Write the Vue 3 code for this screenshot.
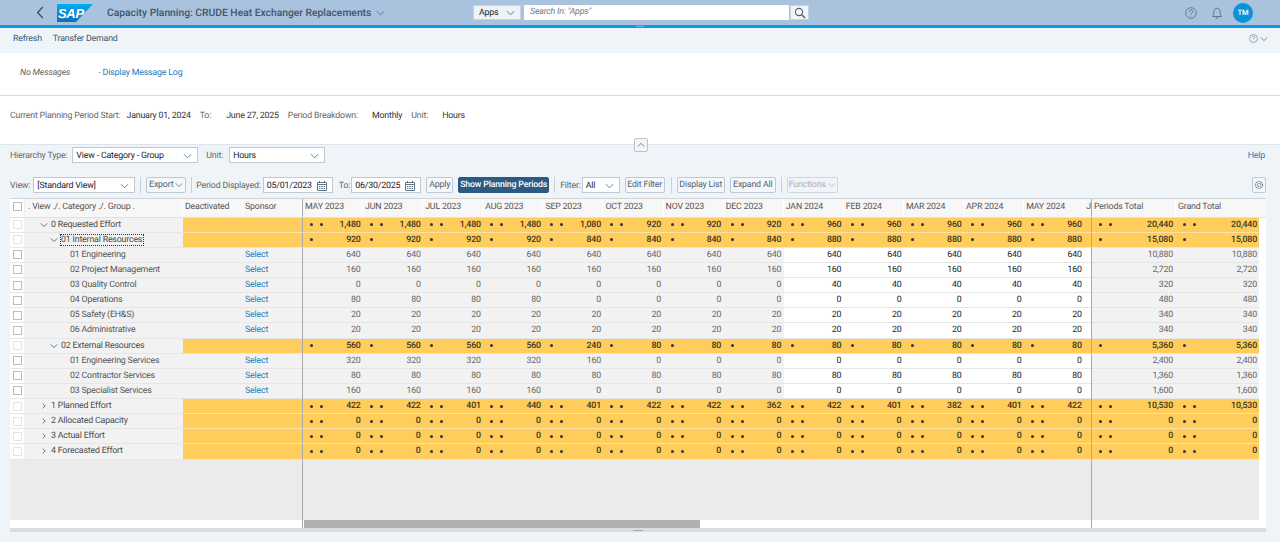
<script setup>
const months = ['MAY 2023','JUN 2023','JUL 2023','AUG 2023','SEP 2023','OCT 2023','NOV 2023','DEC 2023','JAN 2024','FEB 2024','MAR 2024','APR 2024','MAY 2024','JUN 2024']
const rep = (v, n) => Array(n).fill(v)
const rows = [
  { label: '0 Requested Effort', level: 0, open: true, dots: 2, vals: ['1,480','1,480','1,480','1,480','1,080','920','920','920','960','960','960','960','960'], total: '20,440' },
  { label: '01 Internal Resources', level: 1, open: true, dots: 1, focus: true, vals: ['920','920','920','920','840','840','840','840','880','880','880','880','880'], total: '15,080' },
  { label: '01 Engineering', level: 2, vals: rep('640', 13), total: '10,880' },
  { label: '02 Project Management', level: 2, vals: rep('160', 13), total: '2,720' },
  { label: '03 Quality Control', level: 2, vals: [...rep('0', 8), ...rep('40', 5)], total: '320' },
  { label: '04 Operations', level: 2, vals: [...rep('80', 4), ...rep('0', 9)], total: '480' },
  { label: '05 Safety (EH&S)', level: 2, vals: rep('20', 13), total: '340' },
  { label: '06 Administrative', level: 2, vals: rep('20', 13), total: '340' },
  { label: '02 External Resources', level: 1, open: true, dots: 1, vals: ['560','560','560','560','240',...rep('80', 8)], total: '5,360' },
  { label: '01 Engineering Services', level: 2, vals: ['320','320','320','320','160',...rep('0', 8)], total: '2,400' },
  { label: '02 Contractor Services', level: 2, vals: rep('80', 13), total: '1,360' },
  { label: '03 Specialist Services', level: 2, vals: [...rep('160', 4), ...rep('0', 9)], total: '1,600' },
  { label: '1 Planned Effort', level: 0, dots: 2, vals: ['422','422','401','440','401','422','422','362','422','401','382','401','422'], total: '10,530' },
  { label: '2 Allocated Capacity', level: 0, dots: 2, vals: rep('0', 13), total: '0' },
  { label: '3 Actual Effort', level: 0, dots: 2, vals: rep('0', 13), total: '0' },
  { label: '4 Forecasted Effort', level: 0, dots: 2, vals: rep('0', 13), total: '0' },
]
</script>

<template>
  <div class="page">
    <svg class="sprite" width="0" height="0">
      <symbol id="down" viewBox="0 0 10 6"><path d="M1 1l4 4 4-4" fill="none" stroke="currentColor" stroke-width="1"/></symbol>
      <symbol id="right" viewBox="0 0 6 10"><path d="M1 1l4 4-4 4" fill="none" stroke="currentColor" stroke-width="1.4"/></symbol>
      <symbol id="cal" viewBox="0 0 10 10"><path d="M.5 1.5h9v8h-9zM.5 3.5h9M2.5 0v2M7.5 0v2" fill="none" stroke="currentColor" stroke-width=".9"/><path d="M2 5h1.4v1H2zM4.3 5h1.4v1H4.300zM6.600 5H8v1H6.600zM2 7h1.400v1H2zM4.300 7h1.400v1H4.300zM6.600 7H8v1H6.600z" fill="currentColor"/></symbol>
    </svg>

    <header class="shell">
      <div class="shell-left">
        <svg class="back" viewBox="0 0 8 14"><path d="M7 1L1.500 7 7 13" fill="none" stroke="#3e5264" stroke-width="1.500"/></svg>
        <svg class="logo" viewBox="0 0 36 18">
          <defs>
            <linearGradient id="sapg" x1="0" y1="0" x2="0" y2="1">
              <stop offset="0" stop-color="#00aeef"/>
              <stop offset="1" stop-color="#0a6fb8"/>
            </linearGradient>
          </defs>
          <path d="M0 0h36L19 18H0z" fill="url(#sapg)"/>
          <text x="1" y="14" class="logo-text">SAP</text>
        </svg>
        <span class="title">Capacity Planning: CRUDE Heat Exchanger Replacements</span>
        <svg class="ic title-chev"><use href="#down"/></svg>
      </div>
      <div class="search">
        <div class="search-sel"><span>Apps</span><svg class="ic"><use href="#down"/></svg></div>
        <div class="search-input">Search In: "Apps"</div>
        <div class="search-btn">
          <svg viewBox="0 0 12 12" width="12" height="12"><circle cx="5" cy="5" r="3.600" fill="none" stroke="#4a6375" stroke-width="1.100"/><path d="M7.800 7.800L11 11" stroke="#4a6375" stroke-width="1.500"/></svg>
        </div>
      </div>
      <div class="shell-right">
        <svg class="shell-ic help-ic" viewBox="0 0 12 12"><circle cx="6" cy="6" r="5.300" fill="none" stroke="#566d80" stroke-width=".8"/><path d="M4.300 4.700c0-2.300 3.500-2.300 3.500-.2 0 1.300-1.800 1.300-1.800 2.800" fill="none" stroke="#566d80" stroke-width=".9"/><circle cx="6" cy="9" r=".6" fill="#566d80"/></svg>
        <svg class="shell-ic bell-ic" viewBox="0 0 12 12"><path d="M1.500 9.500c1-1 1.300-2.500 1.300-4.500 0-2 1.400-3.800 3.200-3.800S9.200 3 9.200 5c0 2 .3 3.500 1.300 4.500z" fill="none" stroke="#566d80" stroke-width=".9"/><path d="M4.700 11h2.600" stroke="#566d80" stroke-width=".9"/></svg>
        <div class="avatar">TM</div>
      </div>
    </header>
    <div class="bluebar"><span class="grip"></span></div>

    <div class="tools">
      <span>Refresh</span>
      <span>Transfer Demand</span>
      <span class="tools-end">
        <svg viewBox="0 0 12 12" width="9" height="9"><circle cx="6" cy="6" r="5.300" fill="none" stroke="#7d8f9e" stroke-width="1"/><path d="M4.300 4.700c0-2.300 3.500-2.300 3.500-.2 0 1.300-1.800 1.300-1.800 2.800" fill="none" stroke="#7d8f9e"/></svg>
        <svg class="ic tools-chev"><use href="#down"/></svg>
      </span>
    </div>

    <div class="messages">
      <em>No Messages</em>
      <span class="dash">-</span>
      <a>Display Message Log</a>
    </div>

    <div class="info">
      <span class="lb">Current Planning Period Start:</span><span class="val v1">January 01, 2024</span>
      <span class="lb l2">To:</span><span class="val v2">June 27, 2025</span>
      <span class="lb l3">Period Breakdown:</span><span class="val v3">Monthly</span>
      <span class="lb l4">Unit:</span><span class="val v4">Hours</span>
    </div>

    <section class="work">
      <div class="collapse"><svg class="ic up"><use href="#down"/></svg></div>

      <div class="line1">
        <span class="lb">Hierarchy Type:</span>
        <div class="sel s-h"><span>View - Category - Group</span><svg class="ic"><use href="#down"/></svg></div>
        <span class="lb unit">Unit:</span>
        <div class="sel s-u"><span>Hours</span><svg class="ic"><use href="#down"/></svg></div>
        <a class="help">Help</a>
      </div>

      <div class="line2">
        <span class="lb">View:</span>
        <div class="sel s-v"><span>[Standard View]</span><svg class="ic"><use href="#down"/></svg></div>
        <i class="sep"></i>
        <div class="btn b-e">Export<svg class="ic"><use href="#down"/></svg></div>
        <i class="sep tight"></i>
        <span class="lb">Period Displayed:</span>
        <div class="sel s-d"><span>05/01/2023</span><svg class="cal"><use href="#cal"/></svg></div>
        <span class="lb to">To:</span>
        <div class="sel s-d s-to"><span>06/30/2025</span><svg class="cal"><use href="#cal"/></svg></div>
        <div class="btn b-a">Apply</div>
        <div class="btn primary">Show Planning Periods</div>
        <i class="sep"></i>
        <span class="lb">Filter:</span>
        <div class="sel s-f"><span>All</span><svg class="ic"><use href="#down"/></svg></div>
        <div class="btn b-ef">Edit Filter</div>
        <i class="sep wide"></i>
        <div class="btn b-dl">Display List</div>
        <div class="btn b-ea">Expand All</div>
        <i class="sep"></i>
        <div class="btn disabled">Functions<svg class="ic"><use href="#down"/></svg></div>
        <div class="btn gear">
          <svg viewBox="0 0 12 12" width="10" height="10"><circle cx="6" cy="6" r="4.200" fill="none" stroke="#6d8494" stroke-width="1.400" stroke-dasharray="1.500 .7"/><circle cx="6" cy="6" r="2" fill="none" stroke="#6d8494" stroke-width=".9"/></svg>
        </div>
      </div>

      <div class="table">
        <div class="row head">
          <div class="c chk"><b class="box"></b></div>
          <div class="c lab">. View ./. Category ./. Group .</div>
          <div class="c de">Deactivated</div>
          <div class="c sp">Sponsor</div>
          <div class="months">
            <div v-for="m in months" :key="m" class="c mo">{{ m }}</div>
          </div>
          <div class="c tot">Periods Total</div>
          <div class="c gt">Grand Total</div>
          <div class="gutter"></div>
        </div>

        <div v-for="r in rows" :key="r.label" class="row" :class="r.dots ? 'sum' : 'leaf'">
          <div class="c chk"><b class="box"></b></div>
          <div class="c lab" :class="'lv' + r.level">
            <svg v-if="r.dots && r.open" class="ic tree"><use href="#down"/></svg>
            <svg v-else-if="r.dots" class="ic tree"><use href="#right"/></svg>
            <span :class="{ focus: r.focus }">{{ r.label }}</span>
          </div>
          <div class="c de"></div>
          <div class="c sp"><a v-if="!r.dots">Select</a></div>
          <div class="months">
            <div v-for="(m, i) in months" :key="m" class="c mo num" :class="{ future: i >= 8 }">
              <span class="dots"><i v-for="d in (r.dots || 0)" :key="d"></i></span>
              <span>{{ r.vals[i] }}</span>
            </div>
          </div>
          <div class="c tot num">
            <span class="dots"><i v-for="d in (r.dots || 0)" :key="d"></i></span>
            <span>{{ r.total }}</span>
          </div>
          <div class="c gt num">
            <span class="dots"><i v-for="d in (r.dots || 0)" :key="d"></i></span>
            <span>{{ r.total }}</span>
          </div>
          <div class="gutter"></div>
        </div>

        <div class="row empty">
          <div class="e-left"></div>
          <div class="months"></div>
          <div class="e-right"></div>
          <div class="gutter"></div>
        </div>

        <div class="row scroll">
          <div class="e-left"></div>
          <div class="months track"><div class="thumb"></div></div>
          <div class="e-right"></div>
          <div class="gutter"></div>
        </div>
        <div class="strip"><span class="grip dark"></span></div>
      </div>
    </section>
  </div>
</template>

<style>
html, body { margin: 0; background: #eff4f9; }
</style>

<style scoped>
.page { width: 1280px; height: 542px; overflow: hidden; background: #eff4f9; font-family: Roboto, "Noto Sans", sans-serif; font-size: 8.800px; letter-spacing: -.18px; text-rendering: geometricPrecision; color: #333; display: flex; flex-direction: column; }
.sprite { position: absolute; }
.ic { width: 9px; height: 6px; color: #5a7080; flex: none; }
a { color: #1a7cba; }

.shell { height: 25px; background: #a9c2de; display: flex; align-items: center; flex: none; }
.shell-left { width: 473px; display: flex; align-items: center; flex: none; }
.back { width: 8px; height: 13px; margin-left: 36px; flex: none; }
.logo { width: 36px; height: 18px; margin-left: 13px; flex: none; }
.logo-text { font-family: "Liberation Sans", sans-serif; font-weight: 700; font-style: italic; font-size: 13px; fill: #fff; letter-spacing: -.3px; }
.title { margin-left: 14px; font-size: 10.300px; font-weight: 500; letter-spacing: 0; color: #3f566a; white-space: nowrap; }
.title-chev { margin-left: 5px; width: 9px; }
.search { display: flex; height: 15px; }
.search-sel { width: 48px; background: #eef3f8; border: 1px solid #c5d3e2; box-sizing: border-box; display: flex; align-items: center; justify-content: space-between; padding: 0 5px; color: #222; }
.search-input { width: 265px; margin-left: 3px; background: #fff; font-style: italic; color: #777; padding-left: 6px; box-sizing: border-box; line-height: 15px; }
.search-btn { width: 19px; margin-left: 1px; background: #f1f5f9; border: 1px solid #c5d3e2; box-sizing: border-box; display: flex; align-items: center; justify-content: center; }
.shell-right { margin-left: auto; display: flex; align-items: center; padding-right: 27px; }
.shell-ic { width: 12px; height: 12px; }
.help-ic { margin-right: 14px; }
.bell-ic { margin-right: 10px; }
.avatar { width: 20px; height: 20px; border-radius: 50%; background: #0a93d6; color: #e6f4fb; font-size: 7.500px; font-weight: 700; letter-spacing: 0; display: flex; align-items: center; justify-content: center; }
.bluebar { height: 3px; background: #0a9adf; flex: none; display: flex; justify-content: center; align-items: center; }
.grip { width: 8px; height: 1px; background: #6fc0e9; }
.grip.dark { background: #aaa; width: 10px; }

.tools { height: 21px; padding: 0 12px 4px 13px; flex: none; display: flex; align-items: center; gap: 11px; color: #3d566b; }
.tools-end { margin-left: auto; display: flex; align-items: center; gap: 2px; }
.tools-chev { width: 8px; }

.messages { height: 39px; padding: 0 0 3px 20px; flex: none; background: #fff; border-bottom: 1px solid #d9d9d9; display: flex; align-items: center; }
.messages em { color: #666; }
.dash { margin-left: 28px; color: #888; }
.messages a { margin-left: 2px; }

.info { height: 39px; padding: 0 0 9px 10px; flex: none; background: #fff; display: flex; align-items: center; white-space: nowrap; }
.lb { color: #666; white-space: nowrap; flex: none; padding-top: 1px; }
.info .lb, .info .val { padding-top: 0; }
.val { color: #333; }
.v1 { margin-left: 6px; }
.l2 { margin-left: 9px; }
.v2 { margin-left: 15px; }
.l3 { margin-left: 9px; }
.v3 { margin-left: 14px; }
.l4 { margin-left: 9px; }
.v4 { margin-left: 14px; }

.work { flex: 1; position: relative; padding: 2px 14px 0 10px; min-height: 0; border-top: 1px solid #dde4ec; display: flex; flex-direction: column; }
.collapse { position: absolute; left: 634px; top: -7px; width: 14px; height: 14px; box-sizing: border-box; background: #f4f7fa; border: 1px solid #b9c4cf; border-radius: 2px; display: flex; align-items: center; justify-content: center; }
.up { transform: rotate(180deg); width: 8px; color: #4b6478; }

.line1, .line2 { display: flex; align-items: center; height: 16px; flex: none; }
.line2 { margin-top: 14px; }
.sel { height: 16px; box-sizing: border-box; background: #fff; border: 1px solid #bfc9d3; display: flex; align-items: center; justify-content: space-between; padding: 1px 5px 0 3px; color: #222; flex: none; }
.s-h { width: 126px; margin-left: 5px; }
.unit { margin-left: 8px; }
.s-u { width: 96px; margin-left: 6px; }
.help { margin-left: auto; margin-right: 1px; padding-top: 1px; }
.s-v { width: 102px; margin-left: 3px; }
.sep { width: 1px; height: 16px; background: #c8d0d8; margin: 0 5px; flex: none; }
.sep.tight { margin-right: 4px; }
.sep.wide { margin-left: 6px; }
.btn { height: 16px; box-sizing: border-box; background: #f5f7fa; border: 1px solid #bfc9d3; border-radius: 2px; display: flex; align-items: center; justify-content: center; color: #4a6375; flex: none; white-space: nowrap; padding-bottom: 1px; }
.b-e { width: 40px; }
.b-e .ic, .disabled .ic { margin-left: 2px; width: 8px; }
.s-d { width: 70px; margin-left: 2px; }
.s-to { margin-left: 1px; }
.cal { width: 10px; height: 10px; color: #50697c; }
.to { margin-left: 6px; }
.b-a { width: 27px; margin-left: 5px; }
.primary { width: 91px; margin-left: 5px; background: #2b5a82; border-color: #2b5a82; color: #fff; font-weight: 500; }
.s-f { width: 38px; margin-left: 1px; }
.b-ef { width: 40px; margin-left: 5px; }
.b-dl { width: 48px; }
.b-ea { width: 46px; margin-left: 5px; }
.disabled { width: 51px; color: #a5b2bd; background: #f0f4f8; border-color: #cfd7df; }
.disabled .ic { color: #a5b2bd; }
.gear { width: 14px; margin-left: auto; }

.table { margin-top: 5px; flex: none; height: 333px; display: flex; flex-direction: column; border-top: 1px solid #d3d3d3; background: #fff; margin-bottom: 12px; }
.row { display: flex; height: 15.125px; flex: none; box-sizing: border-box; }
.head { height: 18.500px; background: #f7f7f7; border-bottom: 1px solid #e0e0e0; color: #555; }
.head .c { padding-bottom: 2px; }
.c { box-sizing: border-box; flex: none; display: flex; align-items: center; white-space: nowrap; overflow: hidden; }
.chk { width: 15px; background: #fff; justify-content: center; border-right: 1px solid #f0f0f0; }
.box { width: 9px; height: 9px; box-sizing: border-box; background: #fff; border: 1px solid #bdbdbd; display: block; }
.sum .box { border-color: #e4e4e4; }
.lab { width: 158px; padding-left: 3px; }
.head .lab, .head .de, .head .sp { border-right: 1px solid #fff; }
.de { width: 60px; padding-left: 2px; }
.sp { width: 59px; padding-left: 2px; }
.months { width: 790px; flex: none; display: flex; overflow: hidden; border-left: 1px solid #aaa; border-right: 1px solid #aaa; box-sizing: border-box; }
.mo { width: 60.100px; padding: 0 2.500px 0 2px; }
.head .mo { border-right: 1px solid #fff; }
.tot { width: 84px; padding: 0 3px 0 2px; }
.gt { width: 83px; padding: 0 2px 0 2px; }
.head .tot { border-right: 1px solid #fff; }
.gutter { flex: 1; background: #fff; }
.head .gutter { background: #f7f7f7; }
.num { justify-content: flex-end; position: relative; }
.dots { position: absolute; left: 7px; top: 0; bottom: 0; display: flex; align-items: center; gap: 7px; }
.dots i { width: 3px; height: 3px; border-radius: 50%; background: #333; display: block; }

.leaf { color: #555; }
.leaf .c { border-bottom: 1px solid #e6e6e6; }
.leaf .lab, .leaf .de, .leaf .sp, .leaf .tot, .leaf .gt { background: #f2f2f2; }
.leaf .mo { background: #f2f2f2; color: #666; }
.leaf .mo.future { background: #fff; color: #222; }
.leaf .tot, .leaf .gt { color: #666; }
.sum { color: #4a4a4a; }
.sum .lab { background: #f2f2f2; border-bottom: 1px solid #e6e6e6; }
.sum .chk { border-bottom: 1px solid #e6e6e6; }
.sum .de, .sum .sp, .sum .months, .sum .tot, .sum .gt { background: #ffcd5c; border-bottom: 1px solid #fde3a8; }
.sum .num { font-weight: 500; color: #3d341d; }
.lv0 { padding-left: 15px; }
.lv1 { padding-left: 25px; }
.lv2 { padding-left: 45px; }
.tree { width: 8px; margin-right: 3px; color: #3f5a70; }
.focus { outline: 1px dotted #333; padding: 0 1px 0 0; }

.empty { flex: 1; background: #ebebeb; height: auto; min-height: 0; }
.e-left { width: 292px; flex: none; }
.e-right { width: 167px; flex: none; }
.empty .gutter { background: #fff; }
.scroll { height: 8px; background: #fff; }
.track { padding-left: 1px; }
.thumb { width: 396px; height: 8px; background: #b0b0b0; }
.strip { height: 4px; background: #ddd; flex: none; display: flex; justify-content: center; align-items: center; }
</style>
